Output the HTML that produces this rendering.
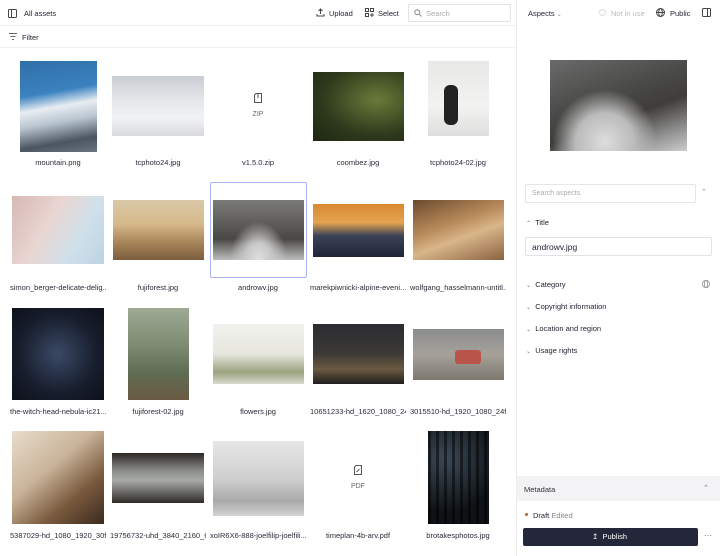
<!DOCTYPE html>
<html><head><meta charset="utf-8"><style>
*{box-sizing:border-box;margin:0;padding:0}
body{width:720px;height:556px;overflow:hidden;background:#fff;font-family:"Liberation Sans",sans-serif;color:#1f2030;font-size:8px;position:relative}
.a{position:absolute}
.t{position:absolute;font-size:7.5px;color:#2a2b38;white-space:nowrap;text-align:center;width:96px;overflow:hidden;margin-left:2px}
.img{position:absolute}
svg{display:block}
</style></head><body>
<div class="a" style="left:0;top:0;width:516px;height:26px;border-bottom:1px solid #eee"></div>
<svg class="a" style="left:8px;top:9px" width="9" height="9" viewBox="0 0 9 9"><rect x=".5" y=".5" width="8" height="8" rx="1" fill="none" stroke="#444"/><line x1="3.5" y1="1" x2="3.5" y2="8" stroke="#444"/></svg>
<div class="a" style="left:24px;top:9px;font-size:7.5px">All assets</div>
<svg class="a" style="left:316px;top:8px" width="9" height="9" viewBox="0 0 9 9"><path d="M4.5 6V1M2.5 3l2-2 2 2M1 6v2h7V6" fill="none" stroke="#444"/></svg>
<div class="a" style="left:329px;top:9px;font-size:7.5px">Upload</div>
<svg class="a" style="left:365px;top:8px" width="9" height="9" viewBox="0 0 9 9"><rect x=".5" y=".5" width="3" height="3" fill="none" stroke="#444"/><rect x="5.5" y=".5" width="3" height="3" fill="none" stroke="#444"/><rect x=".5" y="5.5" width="3" height="3" fill="none" stroke="#444"/><path d="M7 5v4M5 7h4" stroke="#444"/></svg>
<div class="a" style="left:378px;top:9px;font-size:7.5px">Select</div>
<div class="a" style="left:408px;top:4px;width:103px;height:18px;border:1px solid #e2e2e6;border-radius:2px"></div>
<svg class="a" style="left:414px;top:9px" width="8" height="8" viewBox="0 0 8 8"><circle cx="3.3" cy="3.3" r="2.5" fill="none" stroke="#888"/><path d="M5.2 5.2L7.5 7.5" stroke="#888"/></svg>
<div class="a" style="left:426px;top:9px;font-size:7.5px;color:#aaa">Search</div>
<svg class="a" style="left:9px;top:33px" width="8" height="7" viewBox="0 0 8 7"><path d="M0 .5h8M1.5 3.5h5M3 6.5h2" stroke="#666"/></svg>
<div class="a" style="left:22px;top:33px;font-size:7.5px">Filter</div>
<div class="a" style="left:0;top:47px;width:516px;border-top:1px solid #f0f0f0"></div>

<div class="a" style="left:516px;top:0;width:1px;height:556px;background:#ececec"></div>
<div class="a" style="left:528px;top:9px;font-size:7.5px">Aspects <span style="color:#888;font-size:6px">&#8964;</span></div>
<div class="a" style="left:599px;top:9px;width:7px;height:7px;border:1px solid #ddd;border-radius:50%"></div>
<div class="a" style="left:611px;top:9px;font-size:7.5px;color:#bbb">Not in use</div>
<svg class="a" style="left:656px;top:8px" width="9" height="9" viewBox="0 0 9 9"><circle cx="4.5" cy="4.5" r="4" fill="none" stroke="#444"/><ellipse cx="4.5" cy="4.5" rx="1.8" ry="4" fill="none" stroke="#444"/><path d="M.5 4.5h8" stroke="#444"/></svg>
<div class="a" style="left:670px;top:9px;font-size:7.5px">Public</div>
<svg class="a" style="left:702px;top:8px" width="9" height="9" viewBox="0 0 9 9"><rect x=".5" y=".5" width="8" height="8" rx="1" fill="none" stroke="#444"/><line x1="5.5" y1="1" x2="5.5" y2="8" stroke="#444"/></svg>
<div class="img" style="left:550px;top:60px;width:137px;height:91px;background:radial-gradient(ellipse at 40% 90%,#ddd 0,#bbb 25%,transparent 45%),linear-gradient(160deg,#6a6a6a,#4a4a48 40%,#3f3d3a 60%,#9a9a9a 85%,#ccc)"></div>
<div class="a" style="left:525px;top:184px;width:171px;height:19px;border:1px solid #e6e6ea;border-radius:2px"></div>
<div class="a" style="left:532px;top:190px;font-size:7px;color:#aaa">Search aspects</div>
<div class="a" style="left:701px;top:188px;font-size:7px;color:#888">&#8963;</div>
<div class="a" style="left:526px;top:218px;font-size:7.5px"><span style="color:#777;font-size:6px">&#8963;</span>&nbsp; Title</div>
<div class="a" style="left:525px;top:237px;width:187px;height:19px;border:1px solid #e2e2e6;border-radius:2px"></div>
<div class="a" style="left:532px;top:242px;font-size:8.5px">androwv.jpg</div>
<div class="a" style="left:526px;top:280px;font-size:7.5px"><span style="color:#777;font-size:6px">&#8964;</span>&nbsp; Category</div>
<svg class="a" style="left:702px;top:280px" width="8" height="8" viewBox="0 0 9 9"><circle cx="4.5" cy="4.5" r="4" fill="none" stroke="#999"/><ellipse cx="4.5" cy="4.5" rx="1.8" ry="4" fill="none" stroke="#999"/></svg>
<div class="a" style="left:526px;top:302px;font-size:7.5px"><span style="color:#777;font-size:6px">&#8964;</span>&nbsp; Copyright information</div>
<div class="a" style="left:526px;top:324px;font-size:7.5px"><span style="color:#777;font-size:6px">&#8964;</span>&nbsp; Location and region</div>
<div class="a" style="left:526px;top:346px;font-size:7.5px"><span style="color:#777;font-size:6px">&#8964;</span>&nbsp; Usage rights</div>
<div class="a" style="left:517px;top:476px;width:203px;height:25px;background:#f3f3f5"></div>
<div class="a" style="left:524px;top:485px;font-size:7.5px;color:#333">Metadata</div>
<div class="a" style="left:703px;top:484px;font-size:7px;color:#777">&#8963;</div>
<div class="a" style="left:525px;top:513px;width:3px;height:3px;border-radius:50%;background:#b5651d"></div>
<div class="a" style="left:533px;top:511px;font-size:7.5px">Draft <span style="color:#888">Edited</span></div>
<div class="a" style="left:523px;top:528px;width:175px;height:18px;background:#24263a;border-radius:2px"></div>
<div class="a" style="left:592px;top:532px;font-size:7.5px;color:#fff">&#8613;&nbsp; Publish</div>
<div class="a" style="left:704px;top:531px;font-size:8px;color:#555">···</div>

<div class="img" style="left:20px;top:61px;width:77px;height:91px;background:linear-gradient(170deg,#2f6fa8 0,#3b82c0 35%,#e8edf2 50%,#b8c4cf 65%,#4a5560 85%,#6a7580)"></div>
<div class="t" style="left:8px;top:158px">mountain.png</div>
<div class="img" style="left:112px;top:76px;width:92px;height:60px;background:linear-gradient(180deg,#c9cdd2,#e4e6e9 40%,#f1f2f3 70%,#d8d9db)"></div>
<div class="t" style="left:108px;top:158px">tcphoto24.jpg</div>
<svg class="a" style="left:254px;top:93px" width="8" height="10" viewBox="0 0 8 10"><path d="M2 .5h5.5v9h-7V2z" fill="none" stroke="#555"/><path d="M4 1v4" stroke="#555"/></svg>
<div class="t" style="left:208px;top:111px;font-size:7px;color:#666">ZIP</div>
<div class="t" style="left:208px;top:158px">v1.5.0.zip</div>
<div class="img" style="left:313px;top:72px;width:91px;height:69px;background:radial-gradient(ellipse at 70% 40%,#6b7a3a,#2e3a1c 60%,#1e2612)"></div>
<div class="t" style="left:308px;top:158px">coombez.jpg</div>
<div class="img" style="left:428px;top:61px;width:61px;height:75px;background:linear-gradient(180deg,#e8e8e6,#f2f2f0 60%,#dedede)"></div>
<div class="img" style="left:444px;top:85px;width:14px;height:40px;background:#222;border-radius:6px"></div>
<div class="t" style="left:408px;top:158px">tcphoto24-02.jpg</div>
<div class="img" style="left:12px;top:196px;width:92px;height:68px;background:linear-gradient(120deg,#d6b8b4,#e9d6d2 40%,#cfe0ea 70%,#bcd3e3)"></div>
<div class="t" style="left:8px;top:283px">simon_berger-delicate-delig...</div>
<div class="img" style="left:113px;top:200px;width:91px;height:60px;background:linear-gradient(180deg,#d9c9a8,#d6b98a 40%,#a9855a 70%,#7b5e3e)"></div>
<div class="t" style="left:108px;top:283px">fujiforest.jpg</div>
<div class="a" style="left:210px;top:182px;width:97px;height:96px;border:1px solid #a9b4f5;border-radius:2px"></div>
<div class="img" style="left:213px;top:200px;width:91px;height:60px;background:radial-gradient(ellipse at 50% 100%,#e0e0e0 0,#c8c8c8 20%,transparent 45%),linear-gradient(180deg,#7a7a78,#5e5c58 40%,#4a4844 65%,#bdbdbd)"></div>
<div class="t" style="left:208px;top:283px">androwv.jpg</div>
<div class="img" style="left:313px;top:204px;width:91px;height:53px;background:linear-gradient(180deg,#d9892f,#e5a34f 35%,#3b4257 60%,#1f2538)"></div>
<div class="t" style="left:308px;top:283px">marekpiwnicki-alpine-eveni...</div>
<div class="img" style="left:413px;top:200px;width:91px;height:60px;background:linear-gradient(160deg,#6b4b2d,#b88a5a 40%,#d9b68a 60%,#8a6240)"></div>
<div class="t" style="left:408px;top:283px">wolfgang_hasselmann-untitl...</div>
<div class="img" style="left:12px;top:308px;width:92px;height:92px;background:radial-gradient(ellipse at 50% 50%,#3a4a66,#171d2c 60%,#0d111a)"></div>
<div class="t" style="left:8px;top:407px">the-witch-head-nebula-ic21...</div>
<div class="img" style="left:128px;top:308px;width:61px;height:92px;background:linear-gradient(180deg,#9eaa94,#7d8c73 40%,#5f6d52 70%,#6b5a44)"></div>
<div class="t" style="left:108px;top:407px">fujiforest-02.jpg</div>
<div class="img" style="left:213px;top:324px;width:91px;height:60px;background:linear-gradient(180deg,#f2f2ee,#e6e6de 50%,#9aa27e 80%,#d9d9cf)"></div>
<div class="t" style="left:208px;top:407px">flowers.jpg</div>
<div class="img" style="left:313px;top:324px;width:91px;height:60px;background:linear-gradient(180deg,#2a2c30,#3d3a36 50%,#6a5a40 75%,#201f1e)"></div>
<div class="t" style="left:308px;top:407px">10651233-hd_1620_1080_24f...</div>
<div class="img" style="left:413px;top:329px;width:91px;height:51px;background:linear-gradient(180deg,#8a8c8e,#a6a29a 50%,#7d776e)"></div>
<div class="img" style="left:455px;top:350px;width:26px;height:14px;background:#b8544a;border-radius:3px"></div>
<div class="t" style="left:408px;top:407px">3015510-hd_1920_1080_24fp...</div>
<div class="img" style="left:12px;top:431px;width:92px;height:93px;background:linear-gradient(140deg,#e8dccb,#c9b49a 40%,#7a5a3e 70%,#3a2a1e)"></div>
<div class="t" style="left:8px;top:531px">5387029-hd_1080_1920_30f...</div>
<div class="img" style="left:112px;top:453px;width:92px;height:50px;background:linear-gradient(180deg,#2b2724,#8a8c8a 35%,#a8aaa8 55%,#2e2a26)"></div>
<div class="t" style="left:108px;top:531px">19756732-uhd_3840_2160_6...</div>
<div class="img" style="left:213px;top:441px;width:91px;height:75px;background:linear-gradient(180deg,#e6e6e6,#cfcfcf 50%,#a9a9a9 80%,#d4d4d4)"></div>
<div class="t" style="left:208px;top:531px">xoIR6X6-888-joelfilip-joelfili...</div>
<svg class="a" style="left:354px;top:465px" width="8" height="10" viewBox="0 0 8 10"><path d="M2 .5h5.5v9h-7V2z" fill="none" stroke="#555"/><path d="M2.5 7l3-3" stroke="#555"/></svg>
<div class="t" style="left:308px;top:483px;font-size:7px;color:#666">PDF</div>
<div class="t" style="left:308px;top:531px">timeplan-4b-arv.pdf</div>
<div class="img" style="left:428px;top:431px;width:61px;height:93px;background:radial-gradient(circle at 30% 30%,#3c4a56,#0e1216 70%),#111"></div>
<div class="img" style="left:428px;top:431px;width:61px;height:93px;background:repeating-linear-gradient(90deg,rgba(0,0,0,.5) 0 3px,transparent 3px 8px)"></div>
<div class="t" style="left:408px;top:531px">brotakesphotos.jpg</div>
</body></html>
